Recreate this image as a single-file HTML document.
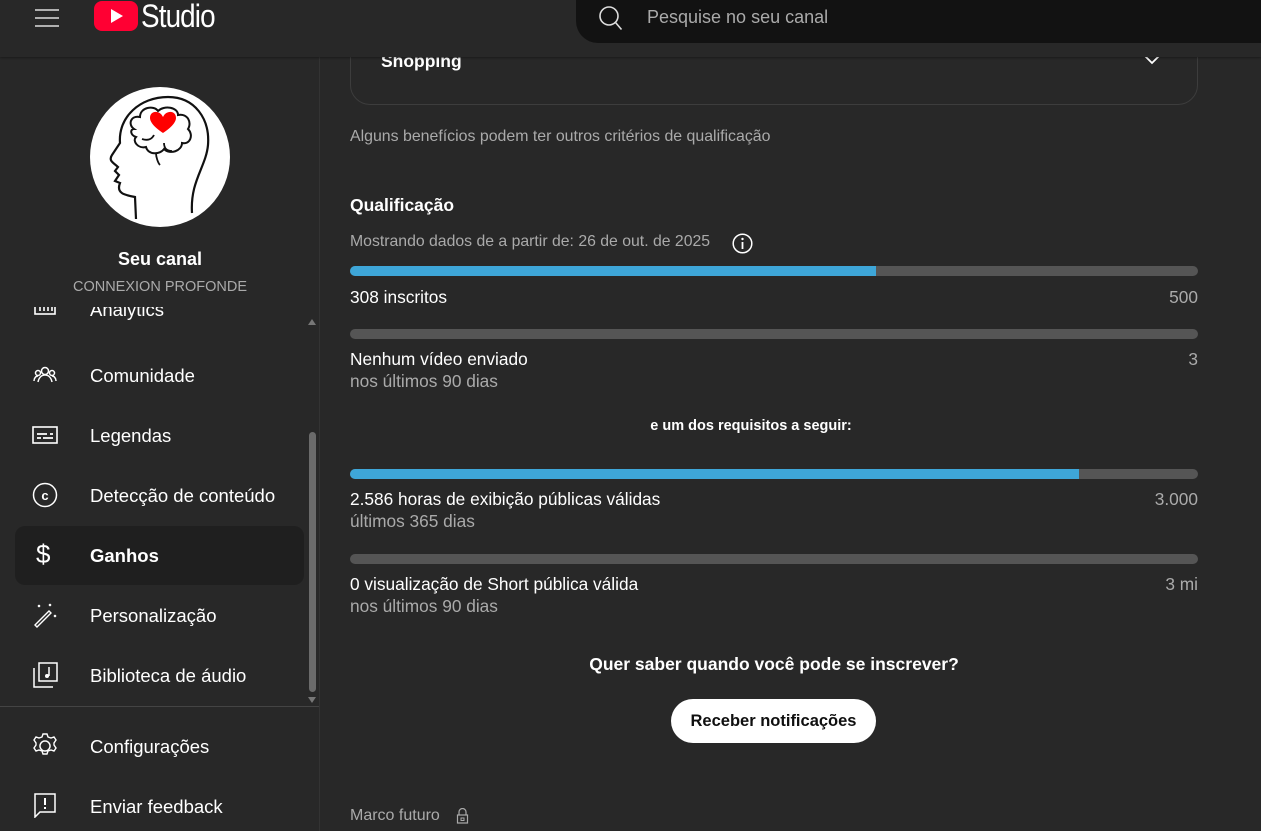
<!DOCTYPE html>
<html><head><meta charset="utf-8">
<style>
*{margin:0;padding:0;box-sizing:border-box}
body{width:1261px;height:831px;overflow:hidden;background:#282828;font-family:"Liberation Sans",Arial,sans-serif;color:#fff;position:relative}
.abs{position:absolute;white-space:nowrap}
.hdr{position:absolute;left:0;top:0;width:1261px;height:57px;background:#282828;box-shadow:0 1px 2px rgba(0,0,0,.35);z-index:5}
.search{position:absolute;left:576px;top:-1px;width:700px;height:44px;background:#121212;border-radius:0 0 0 22px}
.side{position:absolute;left:0;top:57px;width:320px;height:774px;border-right:1px solid #333}
.item{position:absolute;left:90px;font-size:18.5px;color:#fff}
.ico{position:absolute;left:32px;width:26px;height:26px}
.g{color:#aaa}
.bar{position:absolute;left:350px;width:848px;height:10px;border-radius:5px;background:#555;overflow:hidden}
.bar i{display:block;height:100%;background:#3ea6d8}
.t16{font-size:17.5px}
.t15{font-size:17.3px}
.r{position:absolute;right:63px;white-space:nowrap}
</style></head><body>

<div class="hdr">
  <svg class="abs" style="left:35px;top:8px" width="24" height="20" viewBox="0 0 24 20"><path d="M0 2h24M0 10h24M0 18h24" stroke="#ddd" stroke-width="1.6"/></svg>
  <svg class="abs" style="left:94px;top:1px" width="44" height="30" viewBox="0 0 44 30"><rect x="0" y="0" width="44" height="30" rx="8" fill="#ff0033"/><path d="M17 8v14l12-7z" fill="#fff"/></svg>
  <div class="abs" style="left:141px;top:-2px;font-size:32px;font-family:'Liberation Sans Narrow','Liberation Sans',sans-serif;color:#fff;letter-spacing:-1px;transform:scaleX(.87);transform-origin:left">Studio</div>
  <div class="search">
    <svg class="abs" style="left:22px;top:6px" width="26" height="26" viewBox="0 0 26 26"><circle cx="11" cy="11" r="9" fill="none" stroke="#ddd" stroke-width="1.6"/><path d="M17.5 17.5l6 7" stroke="#ddd" stroke-width="1.6"/></svg>
    <div class="abs" style="left:71px;top:8px;font-size:18px;color:#aaa">Pesquise no seu canal</div>
  </div>
</div>

<div class="side">
  <svg class="abs" style="left:90px;top:30px" width="140" height="140" viewBox="0 0 140 140">
    <circle cx="70" cy="70" r="70" fill="#fff"/>
    <path d="M46 132 L45 110 C34 108 26 106 30 96 L25 94 L29 88 L25 84 L28 80 C24 76 18 74 22 68 L30 56 C28 30 50 10 78 10 C105 10 120 32 118 58 C116 80 100 94 102 126" fill="none" stroke="#111" stroke-width="2.2"/>
    <path d="M44 42c-6-4-4-14 6-12c0-10 14-12 18-6c6-6 20-4 20 4c10-2 14 8 10 14c6 6 2 16-6 14c0 8-12 12-18 6c-4 6-16 6-18-2c-8 2-14-6-10-10c-6-2-6-8-2-8z" fill="none" stroke="#111" stroke-width="2"/>
    <path d="M52 52c6 2 10 0 12-4M74 56c0 6 4 8 8 8M66 66c0 4 2 10 4 12" fill="none" stroke="#111" stroke-width="1.8"/>
    <path d="M73 30c-3-7-13-7-13 1c0 7 13 15 13 15s13-8 13-15c0-8-10-8-13-1z" fill="#f00"/>
  </svg>
  <div class="abs" style="left:0;width:320px;text-align:center;top:192px;font-size:18px;font-weight:bold">Seu canal</div>
  <div class="abs g" style="left:0;width:320px;text-align:center;top:222px;font-size:14.5px">CONNEXION PROFONDE</div>

  <div style="position:absolute;left:0;top:250px;width:320px;height:400px;overflow:hidden">
    <svg class="ico" style="top:-16px" viewBox="0 0 26 26"><rect x="3" y="3" width="20" height="20" fill="none" stroke="#fff" stroke-width="1.6"/><path d="M8 13v7M12 10v10M16 14v6M20 12v8" stroke="#fff" stroke-width="1.6"/></svg>
    <div class="item" style="top:-8px">Analytics</div>
    <svg class="ico" style="top:55px" viewBox="0 0 26 26"><circle cx="13" cy="9" r="3.5" fill="none" stroke="#fff" stroke-width="1.5"/><circle cx="6" cy="11" r="2.5" fill="none" stroke="#fff" stroke-width="1.5"/><circle cx="20" cy="11" r="2.5" fill="none" stroke="#fff" stroke-width="1.5"/><path d="M6 20c1-5 4-7 7-7s6 2 7 7M2 19c0-3 2-5 4-5M24 19c0-3-2-5-4-5" fill="none" stroke="#fff" stroke-width="1.5"/></svg>
    <div class="item" style="top:58px">Comunidade</div>
    <svg class="ico" style="top:115px" viewBox="0 0 26 26"><rect x="1" y="5" width="24" height="16" fill="none" stroke="#fff" stroke-width="1.6"/><path d="M5 12h10M5 16h4M11 16h10M18 12h3" stroke="#fff" stroke-width="1.8"/></svg>
    <div class="item" style="top:118px">Legendas</div>
  </div>
  <svg class="ico" style="top:425px" viewBox="0 0 26 26"><circle cx="13" cy="13" r="11.5" fill="none" stroke="#fff" stroke-width="1.5"/><text x="13" y="18" text-anchor="middle" font-size="13" font-weight="bold" fill="#fff" font-family="Liberation Sans">c</text></svg>
  <div class="item" style="top:428px">Detecção de conteúdo</div>
  <div style="position:absolute;left:15px;top:469px;width:289px;height:59px;background:#1f1f1f;border-radius:10px"></div>
  <div class="abs" style="left:36px;top:482px;font-size:26px;color:#fff">$</div>
  <div class="item" style="top:488px;font-weight:bold">Ganhos</div>
  <svg class="ico" style="top:545px" viewBox="0 0 26 26"><path d="M3 23l14-14 2 2-14 14z" fill="none" stroke="#fff" stroke-width="1.4"/><path d="M6 3l2 2M8 3l-2 2M17 2l2 2M19 2l-2 2M22 13l2 2M24 13l-2 2" stroke="#fff" stroke-width="1.2"/></svg>
  <div class="item" style="top:548px">Personalização</div>
  <svg class="ico" style="top:605px" viewBox="0 0 26 26"><rect x="7" y="1" width="18" height="18" fill="none" stroke="#fff" stroke-width="1.5"/><path d="M2 6v19h19" fill="none" stroke="#fff" stroke-width="1.5"/><path d="M17 5v9" stroke="#fff" stroke-width="1.5"/><circle cx="15" cy="14" r="2" fill="#fff"/></svg>
  <div class="item" style="top:608px">Biblioteca de áudio</div>

  <div style="position:absolute;left:309px;top:375px;width:7px;height:260px;background:#6b6b6b;border-radius:4px"></div>
  <div class="abs" style="left:308px;top:262px;width:0;height:0;border-left:4px solid transparent;border-right:4px solid transparent;border-bottom:6px solid #777"></div>
  <div class="abs" style="left:308px;top:640px;width:0;height:0;border-left:4px solid transparent;border-right:4px solid transparent;border-top:6px solid #777"></div>
  <div style="position:absolute;left:0;top:649px;width:319px;height:1px;background:#444"></div>

  <svg class="ico" style="top:676px" viewBox="0 0 26 26"><path d="M13 8a5 5 0 1 0 .01 0z" fill="none" stroke="#fff" stroke-width="1.5"/><path d="M11 1h4l1 3 3 1 3-1 2 3-2 3v2l2 3-2 3-3-1-3 1-1 3h-4l-1-3-3-1-3 1-2-3 2-3v-2l-2-3 2-3 3 1 3-1z" fill="none" stroke="#fff" stroke-width="1.4"/></svg>
  <div class="item" style="top:679px">Configurações</div>
  <svg class="ico" style="top:735px" viewBox="0 0 26 26"><path d="M3 2h20v18H8l-5 5z" fill="none" stroke="#fff" stroke-width="1.5"/><path d="M13 6v7M13 15v2" stroke="#fff" stroke-width="2"/></svg>
  <div class="item" style="top:739px">Enviar feedback</div>
</div>

<div style="position:absolute;left:350px;top:20px;width:848px;height:85px;border:1px solid #3d3d3d;border-radius:20px"></div>
<div class="abs t16" style="left:381px;top:51px;font-weight:bold">Shopping</div>
<svg class="abs" style="left:1143px;top:54px" width="18" height="12" viewBox="0 0 18 12"><path d="M1 1l8 8 8-8" fill="none" stroke="#fff" stroke-width="1.8"/></svg>

<div class="abs g" style="left:350px;top:128px;font-size:15.9px">Alguns benefícios podem ter outros critérios de qualificação</div>
<div class="abs t16" style="left:350px;top:195px;font-weight:bold">Qualificação</div>
<div class="abs g" style="left:350px;top:233px;font-size:15.8px">Mostrando dados de a partir de: 26 de out. de 2025</div>
<svg class="abs" style="left:732px;top:233px" width="21" height="21" viewBox="0 0 21 21"><circle cx="10.5" cy="10.5" r="9.3" fill="none" stroke="#fff" stroke-width="1.5"/><path d="M10.5 9v7" stroke="#fff" stroke-width="1.8"/><circle cx="10.5" cy="6" r="1.2" fill="#fff"/></svg>

<div class="bar" style="top:266px"><i style="width:526px"></i></div>
<div class="abs t15" style="left:350px;top:287px">308 inscritos</div><div class="r g t15" style="top:287px">500</div>

<div class="bar" style="top:329px"></div>
<div class="abs t15" style="left:350px;top:349px">Nenhum vídeo enviado</div><div class="r g t15" style="top:349px">3</div>
<div class="abs g t15" style="left:350px;top:371px">nos últimos 90 dias</div>

<div class="abs" style="left:350px;width:848px;text-align:center;top:418px;font-size:14.5px;font-weight:bold;padding-right:46px">e um dos requisitos a seguir:</div>

<div class="bar" style="top:469px"><i style="width:729px"></i></div>
<div class="abs t15" style="left:350px;top:489px">2.586 horas de exibição públicas válidas</div><div class="r g t15" style="top:489px">3.000</div>
<div class="abs g t15" style="left:350px;top:511px">últimos 365 dias</div>

<div class="bar" style="top:554px"></div>
<div class="abs t15" style="left:350px;top:574px">0 visualização de Short pública válida</div><div class="r g t15" style="top:574px">3 mi</div>
<div class="abs g t15" style="left:350px;top:596px">nos últimos 90 dias</div>

<div class="abs t16" style="left:350px;width:848px;text-align:center;top:654px;font-weight:bold">Quer saber quando você pode se inscrever?</div>
<div class="abs" style="left:671px;top:699px;width:205px;height:44px;background:#fff;border-radius:22px;color:#0f0f0f;font-size:16.5px;font-weight:bold;text-align:center;line-height:44px">Receber notificações</div>

<div class="abs g" style="left:350px;top:807px;font-size:16px">Marco futuro</div>
<svg class="abs" style="left:456px;top:808px" width="13" height="16" viewBox="0 0 13 16"><path d="M3 7V4a3.5 3.5 0 0 1 7 0v3" fill="none" stroke="#aaa" stroke-width="1.2"/><rect x="1.5" y="7" width="10" height="8" fill="none" stroke="#aaa" stroke-width="1.2"/><rect x="5" y="10" width="3" height="2.5" fill="none" stroke="#aaa"/></svg>
</body></html>
